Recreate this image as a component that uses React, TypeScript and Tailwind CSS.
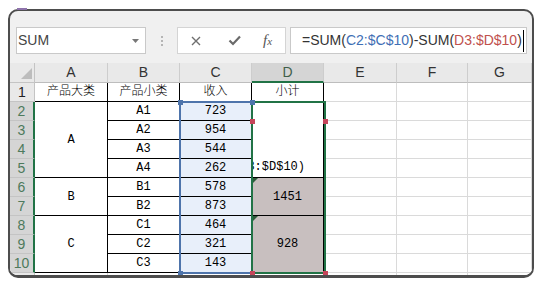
import React from "react";

const cols = ["A", "B", "C", "D", "E", "F", "G"];
const sub = ["A1", "A2", "A3", "A4", "B1", "B2", "C1", "C2", "C3"];
const income = [723, 954, 544, 262, 578, 873, 464, 321, 143];

const groupA: Record<number, { t: string; span: string }> = {
  2: { t: "A", span: "row-span-4" },
  6: { t: "B", span: "row-span-2" },
  8: { t: "C", span: "row-span-3" },
};

const cellFont = { fontFamily: '"Liberation Mono", "Noto Sans CJK SC", monospace' };
const uiFont = { fontFamily: '"Liberation Sans", Arial, sans-serif' };

const tableCell =
  "border-r border-b border-black flex items-center justify-center text-[12px] text-black";
const gridCell = "border-r border-b border-[#dadada] bg-white";

const Handle = ({ x, y, red }: { x: number; y: number; red?: boolean }) => (
  <div
    className={`absolute w-[5px] h-[5px] ${red ? "bg-[#c5455a]" : "bg-[#4e74ab]"}`}
    style={{ left: x - 2, top: y - 2 }}
  />
);

const Corner = () => (
  <div className="absolute left-0 top-0 w-0 h-0 border-t-[6px] border-r-[6px] border-t-[#2f5a3c] border-r-transparent" />
);

export default function App() {
  const rows: React.ReactNode[] = [];

  // column headers
  rows.push(
    <div key="corner" className="relative bg-[#e9e9e9] border-r border-b border-[#c4c4c4]">
      <svg className="absolute right-[2px] bottom-[3px]" width="11" height="11" viewBox="0 0 11 11">
        <polygon points="11,0 11,11 0,11" fill="#bdbdbd" />
      </svg>
    </div>
  );
  cols.forEach((c) =>
    rows.push(
      <div
        key={"h" + c}
        className={`flex items-center justify-center text-[14px] border-r border-[#cdcdcd] ${
          c === "D"
            ? "bg-[#d5d5d5] border-b-2 border-b-[#217346] text-[#3f5f4a]"
            : "bg-[#e9e9e9] border-b border-b-[#bdbdbd] text-[#333]"
        }`}
        style={uiFont}
      >
        {c}
      </div>
    )
  );

  // row 1
  rows.push(
    <div
      key="r1"
      className="bg-[#e9e9e9] border-r border-b border-[#c4c4c4] flex items-center justify-center text-[14px] text-[#222]"
      style={uiFont}
    >
      1
    </div>
  );
  ["产品大类", "产品小类", "收入", "小计"].forEach((t) =>
    rows.push(
      <div key={"t" + t} className={`${tableCell} bg-white font-light`} style={cellFont}>
        {t}
      </div>
    )
  );
  for (let i = 0; i < 3; i++) rows.push(<div key={"e1" + i} className={gridCell} />);

  // rows 2..10
  for (let r = 2; r <= 10; r++) {
    rows.push(
      <div
        key={"rh" + r}
        className="bg-[#d5d5d5] border-r-2 border-r-[#217346] border-b border-b-[#c4c4c4] flex items-center justify-center text-[14px] text-[#4d7a5c]"
        style={uiFont}
      >
        {r}
      </div>
    );
    const g = groupA[r];
    if (g)
      rows.push(
        <div key={"a" + r} className={`${tableCell} ${g.span} bg-white`} style={cellFont}>
          {g.t}
        </div>
      );
    rows.push(
      <div key={"b" + r} className={`${tableCell} bg-white`} style={cellFont}>
        {sub[r - 2]}
      </div>
    );
    rows.push(
      <div key={"c" + r} className={`${tableCell} bg-[#e8effa]`} style={cellFont}>
        {income[r - 2]}
      </div>
    );
    if (r === 2)
      rows.push(
        // in-cell edit of the merged D2:D5, scrolled to the end of the formula
        <div
          key="d2"
          className="row-span-4 border-r border-b border-black bg-white flex items-end justify-end overflow-hidden pr-[18px] pb-[1px] text-[12px] text-black whitespace-nowrap leading-[18px]"
          style={cellFont}
        >
          3:$D$10)
        </div>
      );
    if (r === 6)
      rows.push(
        <div key="d6" className={`${tableCell} row-span-2 bg-[#c8bfbf] relative`} style={cellFont}>
          <Corner />
          1451
        </div>
      );
    if (r === 8)
      rows.push(
        <div key="d8" className={`${tableCell} row-span-3 bg-[#c8bfbf] relative`} style={cellFont}>
          <Corner />
          928
        </div>
      );
    for (let i = 0; i < 3; i++) rows.push(<div key={"e" + r + i} className={gridCell} />);
  }

  // partial row 11
  rows.push(<div key="rh11" className="bg-[#e9e9e9] border-r border-[#c4c4c4]" />);
  for (let i = 0; i < 7; i++) rows.push(<div key={"p" + i} className="border-r border-[#dadada] bg-white" />);

  return (
    <div className="relative w-[543px] h-[286px] bg-white pt-[9px] pl-[8px]">
      <div className="absolute left-[17px] top-[8px] w-[10px] h-[2px] bg-[#8e73ab]" />
      <div className="w-[526px] h-[269px] border-2 border-b-[3px] border-[#4d4d4d] rounded-[10px] overflow-hidden bg-[#f0f0f0] flex flex-col">
        {/* formula bar */}
        <div className="h-[52px] shrink-0 flex items-start pt-[16px] pl-[6px] pr-[5px]" style={uiFont}>
          <div className="w-[130px] h-[27px] bg-white border border-[#c9c9c9] flex items-center justify-between pl-[1px] pr-[6px]">
            <span className="text-[14px] text-[#444]">SUM</span>
            <svg width="7" height="4" viewBox="0 0 7 4">
              <polygon points="0,0 7,0 3.5,4" fill="#777" />
            </svg>
          </div>
          <div className="w-[31px] h-[27px] flex flex-col items-center justify-center gap-[2px]">
            <div className="w-[2px] h-[2px] bg-[#b5b5b5]" />
            <div className="w-[2px] h-[2px] bg-[#b5b5b5]" />
            <div className="w-[2px] h-[2px] bg-[#b5b5b5]" />
          </div>
          <div className="w-[109px] h-[27px] bg-white border border-[#d4d4d4] flex items-center">
            <svg className="ml-[13px]" width="10" height="10" viewBox="0 0 10 10">
              <path d="M1 1L9 9M9 1L1 9" stroke="#6f6f6f" strokeWidth="1.4" />
            </svg>
            <svg className="ml-[27px]" width="13" height="11" viewBox="0 0 13 11">
              <path d="M1.5 5.5L5 9L12 1.5" stroke="#6a6a6a" strokeWidth="2.2" fill="none" />
            </svg>
            <span
              className="ml-[22px] italic text-[#555] text-[15px] leading-none"
              style={{ fontFamily: '"Liberation Serif", serif' }}
            >
              f<span className="text-[11px]">x</span>
            </span>
          </div>
          <div className="ml-[4px] flex-1 h-[27px] bg-white border border-[#c9c9c9] flex items-center pl-[11px] text-[14px] text-[#333]">
            <span>=SUM(</span>
            <span className="text-[#3f6fb5]">C2:$C$10</span>
            <span>)-SUM(</span>
            <span className="text-[#c0504d]">D3:$D$10</span>
            <span>)</span>
            <span className="ml-[1px] w-[1px] h-[22px] bg-black" />
          </div>
        </div>

        {/* grid */}
        <div className="relative flex-1 grid grid-cols-[25px_73px_72px_72px_72px_73px_71px_1fr] grid-rows-[20px_repeat(10,19px)_1fr] bg-white">
          {rows}
          <div className="absolute left-[169px] top-[38px] w-[74px] h-[173px] border-2 border-[#4e74ab]" />
          <div className="absolute left-[241px] top-[38px] w-[75px] h-[173px] border-2 border-[#217346]" />
          <Handle x={170} y={39} />
          <Handle x={242} y={39} />
          <Handle x={170} y={210} />
          <Handle x={242} y={58} red />
          <Handle x={315} y={58} red />
          <Handle x={242} y={210} red />
          <Handle x={315} y={210} red />
        </div>
      </div>
    </div>
  );
}
